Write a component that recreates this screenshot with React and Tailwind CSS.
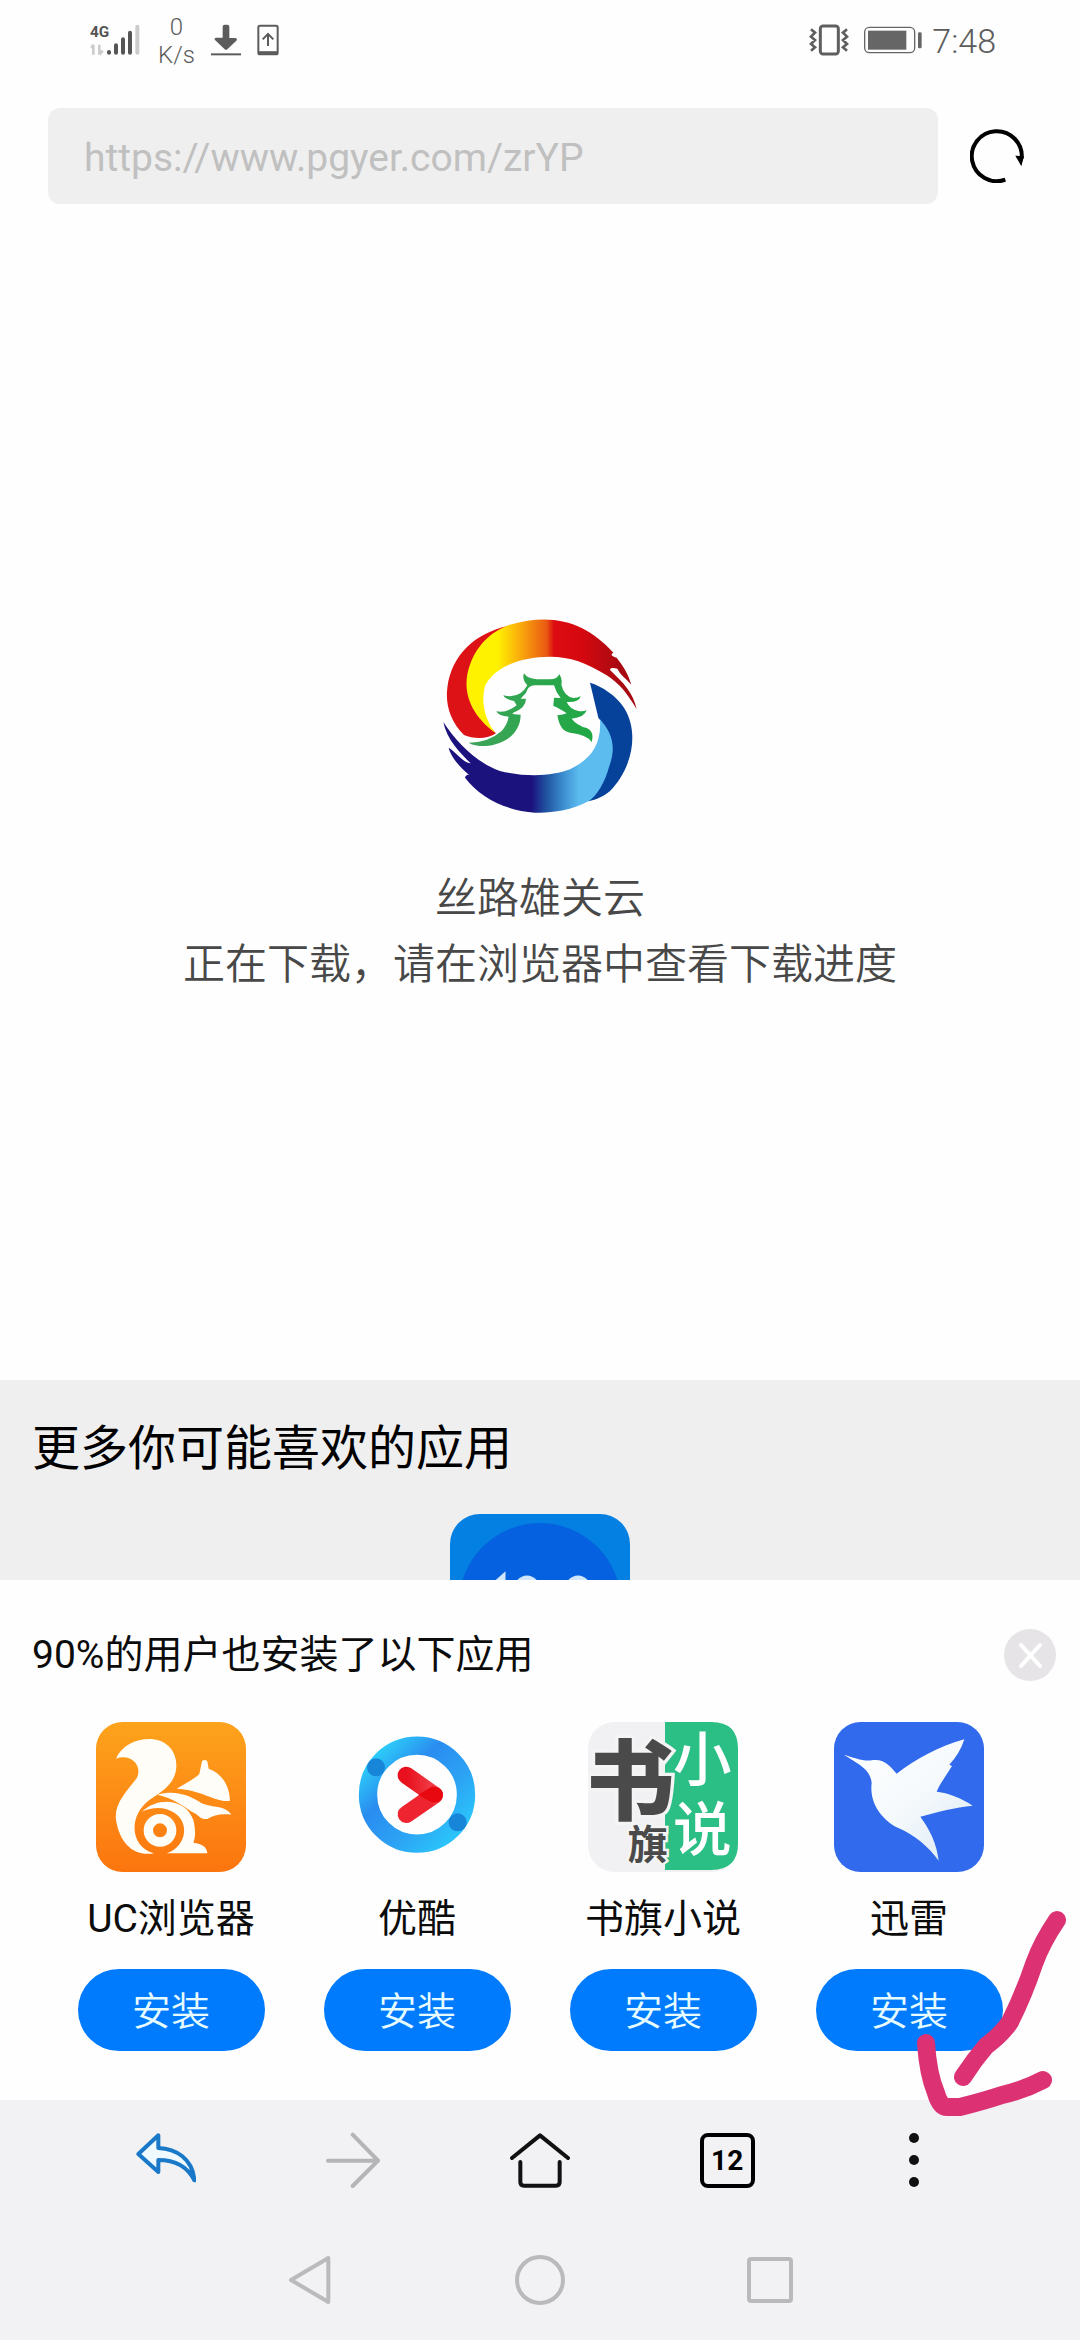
import React, { useState } from 'react';

const SignalIcon = () => (
  <svg viewBox="0 -12 150 120" className="w-[50px] h-10">
    <text x="0" y="39" className="font-['Roboto',sans-serif] font-bold" fontSize="46" fill="#555">4G</text>
    <path d="M10 62v30M4 72l6-10M28 62v30M28 92l10-12" stroke="#ccc" strokeWidth="8" fill="none" />
    <g strokeWidth="12" strokeLinecap="round" stroke="#555">
      <path d="M57 84v2M78 64v22M99 46v40M120 26v60" />
      <path d="M142 8v78" stroke="#ccc" />
    </g>
  </svg>
);

const DownloadIcon = () => (
  <svg viewBox="0 0 90 96" className="w-[30px] h-8" fill="#5c5c5c">
    <path d="M35 8q0-6 6-6h8q6 0 6 6v34h18q8 2 3 8L49 76q-4 3-8 0L12 48q-4-5 3-7h20z" />
    <path d="M0 88h90v6H0z" />
  </svg>
);

const UploadPhoneIcon = () => (
  <svg viewBox="0 0 66 96" className="w-[22px] h-8" fill="none" stroke="#5c5c5c" strokeWidth="6">
    <rect x="4" y="5" width="58" height="86" rx="5" />
    <path d="M4 87h58" strokeWidth="11" />
    <path d="M33 66V32M17 46l16-16 16 16" />
  </svg>
);

const VibrateIcon = () => (
  <svg viewBox="0 0 120 96" className="w-10 h-8" fill="none" stroke="#5f5f5f" strokeWidth="9">
    <rect x="34" y="6" width="54" height="84" rx="8" />
    <path d="M6 16l12 10-12 12 12 10-12 12 12 10-12 10M114 16l-12 10 12 12-12 10 12 12-12 10 12 10" strokeWidth="8" />
  </svg>
);

const BatteryIcon = () => (
  <svg viewBox="0 0 174 84" className="w-[58px] h-7" fill="none">
    <rect x="2" y="4" width="150" height="76" rx="14" stroke="#666" strokeWidth="4" />
    <rect x="12" y="14" width="115" height="57" fill="#666" />
    <rect x="162" y="19" width="11" height="48" rx="4" fill="#666" />
  </svg>
);

const RefreshIcon = () => (
  <svg viewBox="0 0 162 162" className="w-[54px] h-[54px]" fill="none">
    <path d="M106 152A75 75 0 1 1 155 88" stroke="#000" strokeWidth="12" />
    <path d="M136 80l26 2-8 30z" fill="#000" />
  </svg>
);

const CloudLogo = () => (
  <svg viewBox="60 50 600 600" className="w-[200px] h-[200px]">
    <defs>
      <linearGradient id="flame" gradientUnits="userSpaceOnUse" x1="140" y1="0" x2="600" y2="0">
        <stop offset="0.2" stopColor="#fff200" />
        <stop offset="0.33" stopColor="#fbb40c" />
        <stop offset="0.52" stopColor="#ea5a12" />
        <stop offset="0.57" stopColor="#dc0c12" />
        <stop offset="0.75" stopColor="#d6080f" />
        <stop offset="1" stopColor="#a80a12" />
      </linearGradient>
      <linearGradient id="wave" gradientUnits="userSpaceOnUse" x1="70" y1="0" x2="580" y2="0">
        <stop offset="0.52" stopColor="#1b127e" />
        <stop offset="0.6" stopColor="#1f4f9e" />
        <stop offset="0.7" stopColor="#3a8bcd" />
        <stop offset="0.8" stopColor="#5cbcf0" />
      </linearGradient>
      <linearGradient id="grass" x1="0" y1="0" x2="1" y2="0">
        <stop offset="0" stopColor="#3ea45a" />
        <stop offset="1" stopColor="#1fa844" />
      </linearGradient>
    </defs>
    <path d="M228 402C205 420 160 420 132 407C90 365 76 315 82 265C95 165 165 103 262 80L300 70C150 120 120 300 228 402z" fill="#dd1217" />
    <path d="M226 401C150 345 132 280 142 225C160 140 215 95 270 76C400 38 500 70 580 160C570 165 575 172 590 175C610 200 625 225 634 256C620 240 600 225 592 208C580 205 570 205 570 212C610 250 640 280 650 330C620 280 600 255 560 228C500 190 450 172 390 172C300 172 220 205 195 260C182 310 195 360 226 401z" fill="url(#flame)" />
    <path d="M510 250C545 260 590 290 612 325C660 400 635 510 570 575C550 592 530 600 505 606C580 500 590 420 535 355z" fill="#06419a" />
    <path d="M70 368C110 430 170 490 240 515C320 535 400 530 450 510C510 480 545 440 540 360C575 400 590 440 568 500C555 550 530 590 505 606C450 635 390 642 345 640C260 635 180 595 135 535C138 525 145 525 148 528C110 495 90 465 86 445C110 460 130 490 152 492C120 460 80 420 70 368z" fill="url(#wave)" />
    <path d="M312 222Q322 238 350 240H390Q412 240 418 224Q428 240 424 256Q432 290 460 296Q475 296 482 290Q478 310 440 308Q450 330 475 335Q492 337 500 332Q494 354 455 358Q470 378 500 386Q524 396 515 428Q500 405 450 400Q420 397 412 348Q430 346 440 342Q415 325 400 320L402 295L422 296Q408 280 402 258H348Q325 256 318 280L302 298H318Q318 325 280 340Q270 346 302 346C302 400 255 437 195 440Q160 440 146 430Q205 430 245 395Q262 375 266 352Q235 350 229 336Q260 342 290 318L282 305Q255 300 250 288Q300 300 322 258Q305 240 312 222z" fill="url(#grass)" />
  </svg>
);

const UcIcon = () => (
  <svg viewBox="78 66 450 450" className="w-[150px] h-[150px]">
    <defs>
      <linearGradient id="uc" x1="0" y1="0" x2="0" y2="1">
        <stop offset="0" stopColor="#fda31c" />
        <stop offset="1" stopColor="#fc750f" />
      </linearGradient>
    </defs>
    <rect x="78" y="66" width="450" height="450" rx="80" fill="url(#uc)" />
    <g fill="#fffdf8">
      <path d="M138 176C155 135 200 115 245 117C300 122 325 165 318 210C310 260 265 280 235 302C175 350 180 440 252 460C190 470 150 430 138 360C132 310 170 275 200 235C220 195 180 160 138 176z" />
      <path d="M320 266C350 248 375 235 388 222L396 184Q403 176 412 184L416 206C455 220 478 255 480 302C440 310 400 270 320 266z" />
      <path d="M262 284C320 268 365 290 395 310C430 325 465 315 484 344C455 340 430 345 412 357C390 360 385 342 365 335C335 315 310 295 262 284z" />
      <path d="M215 335C270 285 350 300 370 360C376 385 378 410 370 428Q410 432 412 460H290C355 440 365 350 290 328Q255 318 215 335z" />
    </g>
    <circle cx="270" cy="391" r="35" fill="none" stroke="#fffdf8" strokeWidth="28" />
  </svg>
);

const YoukuIcon = () => (
  <svg viewBox="815 66 450 450" className="w-[150px] h-[150px]">
    <defs>
      <linearGradient id="ykRing" x1="0" y1="0" x2="1" y2="1">
        <stop offset="0.1" stopColor="#2cc8f8" />
        <stop offset="0.35" stopColor="#2a8cf0" />
        <stop offset="0.65" stopColor="#2ca4f4" />
        <stop offset="0.9" stopColor="#2bc4fa" />
      </linearGradient>
      <linearGradient id="ykPlay" x1="0" y1="0" x2="1" y2="0">
        <stop offset="0" stopColor="#e8101c" />
        <stop offset="1" stopColor="#f0404a" />
      </linearGradient>
    </defs>
    <circle cx="1040" cy="284" r="147" fill="none" stroke="url(#ykRing)" strokeWidth="55" />
    <circle cx="917" cy="202" r="27" fill="#1785d8" />
    <circle cx="1162" cy="367" r="27" fill="#1785d8" />
    <g strokeWidth="52" strokeLinecap="round" fill="none">
      <path d="M1008 343L1092 285" stroke="#ee2530" />
      <path d="M1008 226L1092 285" stroke="url(#ykPlay)" />
    </g>
    <path d="M1044 284L1086 259Q1118 262 1118 286Q1112 312 1084 308z" fill="#e80810" />
  </svg>
);

const ShuqiIcon = () => (
  <svg viewBox="83 66 450 450" className="w-[150px] h-[150px] font-['Noto_Sans_CJK_SC',sans-serif]">
    <rect x="83" y="66" width="450" height="450" rx="80" fill="#f1f0f2" />
    <path d="M314 66H453Q533 66 533 146V430Q533 510 453 510H314z" fill="#2bbf86" />
    <g fill="#fff" fontSize="176" className="font-medium">
      <text x="338" y="244">小</text>
      <text x="338" y="454">说</text>
    </g>
    <g fill="#4a4a4a" stroke="#f4f4f4" paintOrder="stroke">
      <text x="78" y="338" fontSize="264" strokeWidth="20" className="font-black">书</text>
      <text x="202" y="476" fontSize="120" strokeWidth="14" className="font-bold">旗</text>
    </g>
  </svg>
);

const XunleiIcon = () => (
  <svg viewBox="822 66 450 450" className="w-[150px] h-[150px]">
    <defs>
      <linearGradient id="bird" x1="0" y1="0" x2="1" y2="1">
        <stop offset="0" stopColor="#ffffff" />
        <stop offset="0.5" stopColor="#f6fafc" />
        <stop offset="1" stopColor="#dbe9f6" />
      </linearGradient>
    </defs>
    <rect x="822" y="66" width="450" height="450" rx="80" fill="#316aec" />
    <path d="M852 164C880 172 910 185 935 181C975 175 990 200 1010 221C1070 175 1140 138 1213 118Q1200 160 1168 194L1176 198C1160 225 1140 250 1130 275C1170 280 1205 295 1238 317C1185 322 1135 335 1081 350C1110 390 1130 430 1136 482C1105 440 1065 405 1010 382C960 355 928 305 935 250C932 205 890 190 852 164z" fill="url(#bird)" />
  </svg>
);

const apps = [
  { name: 'UC浏览器', Icon: UcIcon },
  { name: '优酷', Icon: YoukuIcon },
  { name: '书旗小说', Icon: ShuqiIcon },
  { name: '迅雷', Icon: XunleiIcon },
];

const StatusBar = () => (
  <div className="flex items-center justify-between h-20 pl-[90px] pr-[84px] text-[#5c5c5c]">
    <div className="flex items-center">
      <SignalIcon />
      <div className="ml-[18px] pt-0.5 text-2xl leading-7 text-center font-light">
        <p>0</p>
        <p>K/s</p>
      </div>
      <div className="flex items-center gap-4 ml-4">
        <DownloadIcon />
        <UploadPhoneIcon />
      </div>
    </div>
    <div className="flex items-center">
      <VibrateIcon />
      <div className="ml-[15px]">
        <BatteryIcon />
      </div>
      <span className="ml-2.5 pt-0.5 text-[34px] leading-10 font-light">7:48</span>
    </div>
  </div>
);

const AddressBar = () => {
  const [url, setUrl] = useState('https://www.pgyer.com/zrYP');

  return (
    <div className="flex items-center gap-8 pt-7 pb-[30px] pl-12 pr-14">
      <input
        type="text"
        aria-label="网址"
        value={url}
        onChange={(e) => setUrl(e.target.value)}
        className="flex-1 min-w-0 h-24 px-9 pt-1 rounded-xl bg-[#efefef] text-[39px] text-[#c0c0c0] focus:outline-none"
      />
      <button type="button" aria-label="刷新">
        <RefreshIcon />
      </button>
    </div>
  );
};

const MoreApps = () => (
  <section className="h-[200px] overflow-hidden bg-[#efeff0]">
    <h2 className="pt-[34px] px-8 text-5xl leading-[70px] text-black">更多你可能喜欢的应用</h2>
    <svg viewBox="0 0 180 180" className="block w-[180px] h-[180px] mx-auto mt-[30px]">
      <rect width="180" height="180" rx="30" fill="#0480e2" />
      <circle cx="90" cy="90" r="81" fill="#0561e0" />
      <g fill="none" stroke="#cfe6fb" strokeWidth="7">
        <path d="M42 74l10-9v40" />
        <ellipse cx="77" cy="90" rx="14" ry="25" />
        <ellipse cx="128" cy="90" rx="14" ry="25" />
      </g>
    </svg>
  </section>
);

/* hand drawn arrow pointing at the menu button */
const Arrow = () => (
  <svg
    viewBox="0 0 160 220"
    className="absolute right-2 -bottom-6 z-10 w-40 h-[220px] pointer-events-none"
    fill="none"
    stroke="#dc3274"
    strokeWidth="18"
    strokeLinecap="round"
    strokeLinejoin="round"
  >
    <path d="M145 16Q130 38 122 60Q112 90 98 118Q90 130 74 142Q62 156 51 173" />
    <path d="M14 139Q16 170 24 189Q28 203 35 203H48Q72 197 90 191Q112 186 131 176" />
  </svg>
);

const InstallPanel = () => {
  const [open, setOpen] = useState(true);
  if (!open) return null;

  return (
    <section className="relative pt-[46px] pb-[49px] bg-[#fefefe]">
      <div className="flex items-center justify-between h-[58px] pl-8 pr-6">
        <h2 className="text-[39px] leading-[58px] text-[#0c0c0c]">90%的用户也安装了以下应用</h2>
        <button type="button" aria-label="关闭" onClick={() => setOpen(false)}>
          <svg viewBox="0 0 52 52" className="w-[52px] h-[52px]">
            <circle cx="26" cy="26" r="26" fill="#e6e4e7" />
            <path d="M17 16l19 21M36 16L17 37" stroke="#fff" strokeWidth="4" strokeLinecap="round" />
          </svg>
        </button>
      </div>
      <ul className="grid grid-cols-4 mt-[38px] px-12">
        {apps.map(({ name, Icon }) => (
          <li key={name} className="flex flex-col items-center">
            <Icon />
            <p className="mt-[18px] text-[39px] leading-[58px] text-[#0c0c0c]">{name}</p>
            <button
              type="button"
              className="w-[187px] h-[82px] mt-[21px] pt-1 rounded-full bg-[#007bfe] text-[39px] font-[350] text-[#e6fbff]"
            >
              安装
            </button>
          </li>
        ))}
      </ul>
      <Arrow />
    </section>
  );
};

const BrowserToolbar = () => (
  <nav className="grid grid-cols-5 items-center justify-items-center h-30 px-[72px]">
    <button type="button" aria-label="后退">
      <svg viewBox="0 0 180 168" className="w-15 h-14" fill="#eefaff" stroke="#1a78c8" strokeWidth="12" strokeLinejoin="round">
        <path d="M7 66L67 10V48C120 50 170 80 175 145C155 105 120 84 67 84V120z" />
      </svg>
    </button>
    <button type="button" aria-label="前进">
      <svg viewBox="0 0 162 168" className="w-[54px] h-14" fill="none" stroke="#b5b4b6" strokeWidth="12" strokeLinecap="round">
        <path d="M6 86H152M80 8l76 78-76 76" />
      </svg>
    </button>
    <button type="button" aria-label="主页">
      <svg viewBox="0 0 180 168" className="w-15 h-14" fill="none" stroke="#111" strokeWidth="12" strokeLinecap="round" strokeLinejoin="round">
        <path d="M6 78L90 10l84 68" />
        <path d="M31 90v60q0 11 11 11h96q11 0 11-11V90" />
      </svg>
    </button>
    <button
      type="button"
      aria-label="标签页"
      className="w-[55px] h-[55px] rounded-lg border-4 border-black text-[28px] leading-[47px] font-bold text-black"
    >
      12
    </button>
    <button type="button" aria-label="菜单">
      <svg viewBox="0 0 10 56" className="w-2.5 h-14" fill="#111">
        <circle cx="5" cy="6" r="5" />
        <circle cx="5" cy="28" r="5" />
        <circle cx="5" cy="50" r="5" />
      </svg>
    </button>
  </nav>
);

const SystemNav = () => (
  <nav className="grid grid-cols-3 items-center justify-items-center h-30 px-[195px]">
    <button type="button" aria-label="返回">
      <svg viewBox="0 0 126 150" className="w-[42px] h-[50px]" fill="none" stroke="#bab9bb" strokeWidth="12" strokeLinejoin="round">
        <path d="M6 75L118 9v132z" />
      </svg>
    </button>
    <button type="button" aria-label="桌面" className="w-[50px] h-[50px] rounded-full border-4 border-[#bab9bb]" />
    <button type="button" aria-label="最近任务" className="w-[46px] h-[46px] rounded-sm border-4 border-[#bab9bb]" />
  </nav>
);

const App = () => {
  return (
    <div className="flex flex-col min-h-screen bg-[#fefefe] font-['Roboto','Noto_Sans_CJK_SC',sans-serif]">
      <header>
        <StatusBar />
        <AddressBar />
      </header>

      <main className="flex flex-col flex-1 items-center justify-center text-[42px] leading-[66px] font-[350] text-[#484848]">
        <CloudLogo />
        <h1 className="mt-[50px]">丝路雄关云</h1>
        <p>正在下载，请在浏览器中查看下载进度</p>
      </main>

      <MoreApps />
      <InstallPanel />

      <footer className="bg-[#f2f1f3]">
        <BrowserToolbar />
        <SystemNav />
      </footer>
    </div>
  );
};

export default App;
